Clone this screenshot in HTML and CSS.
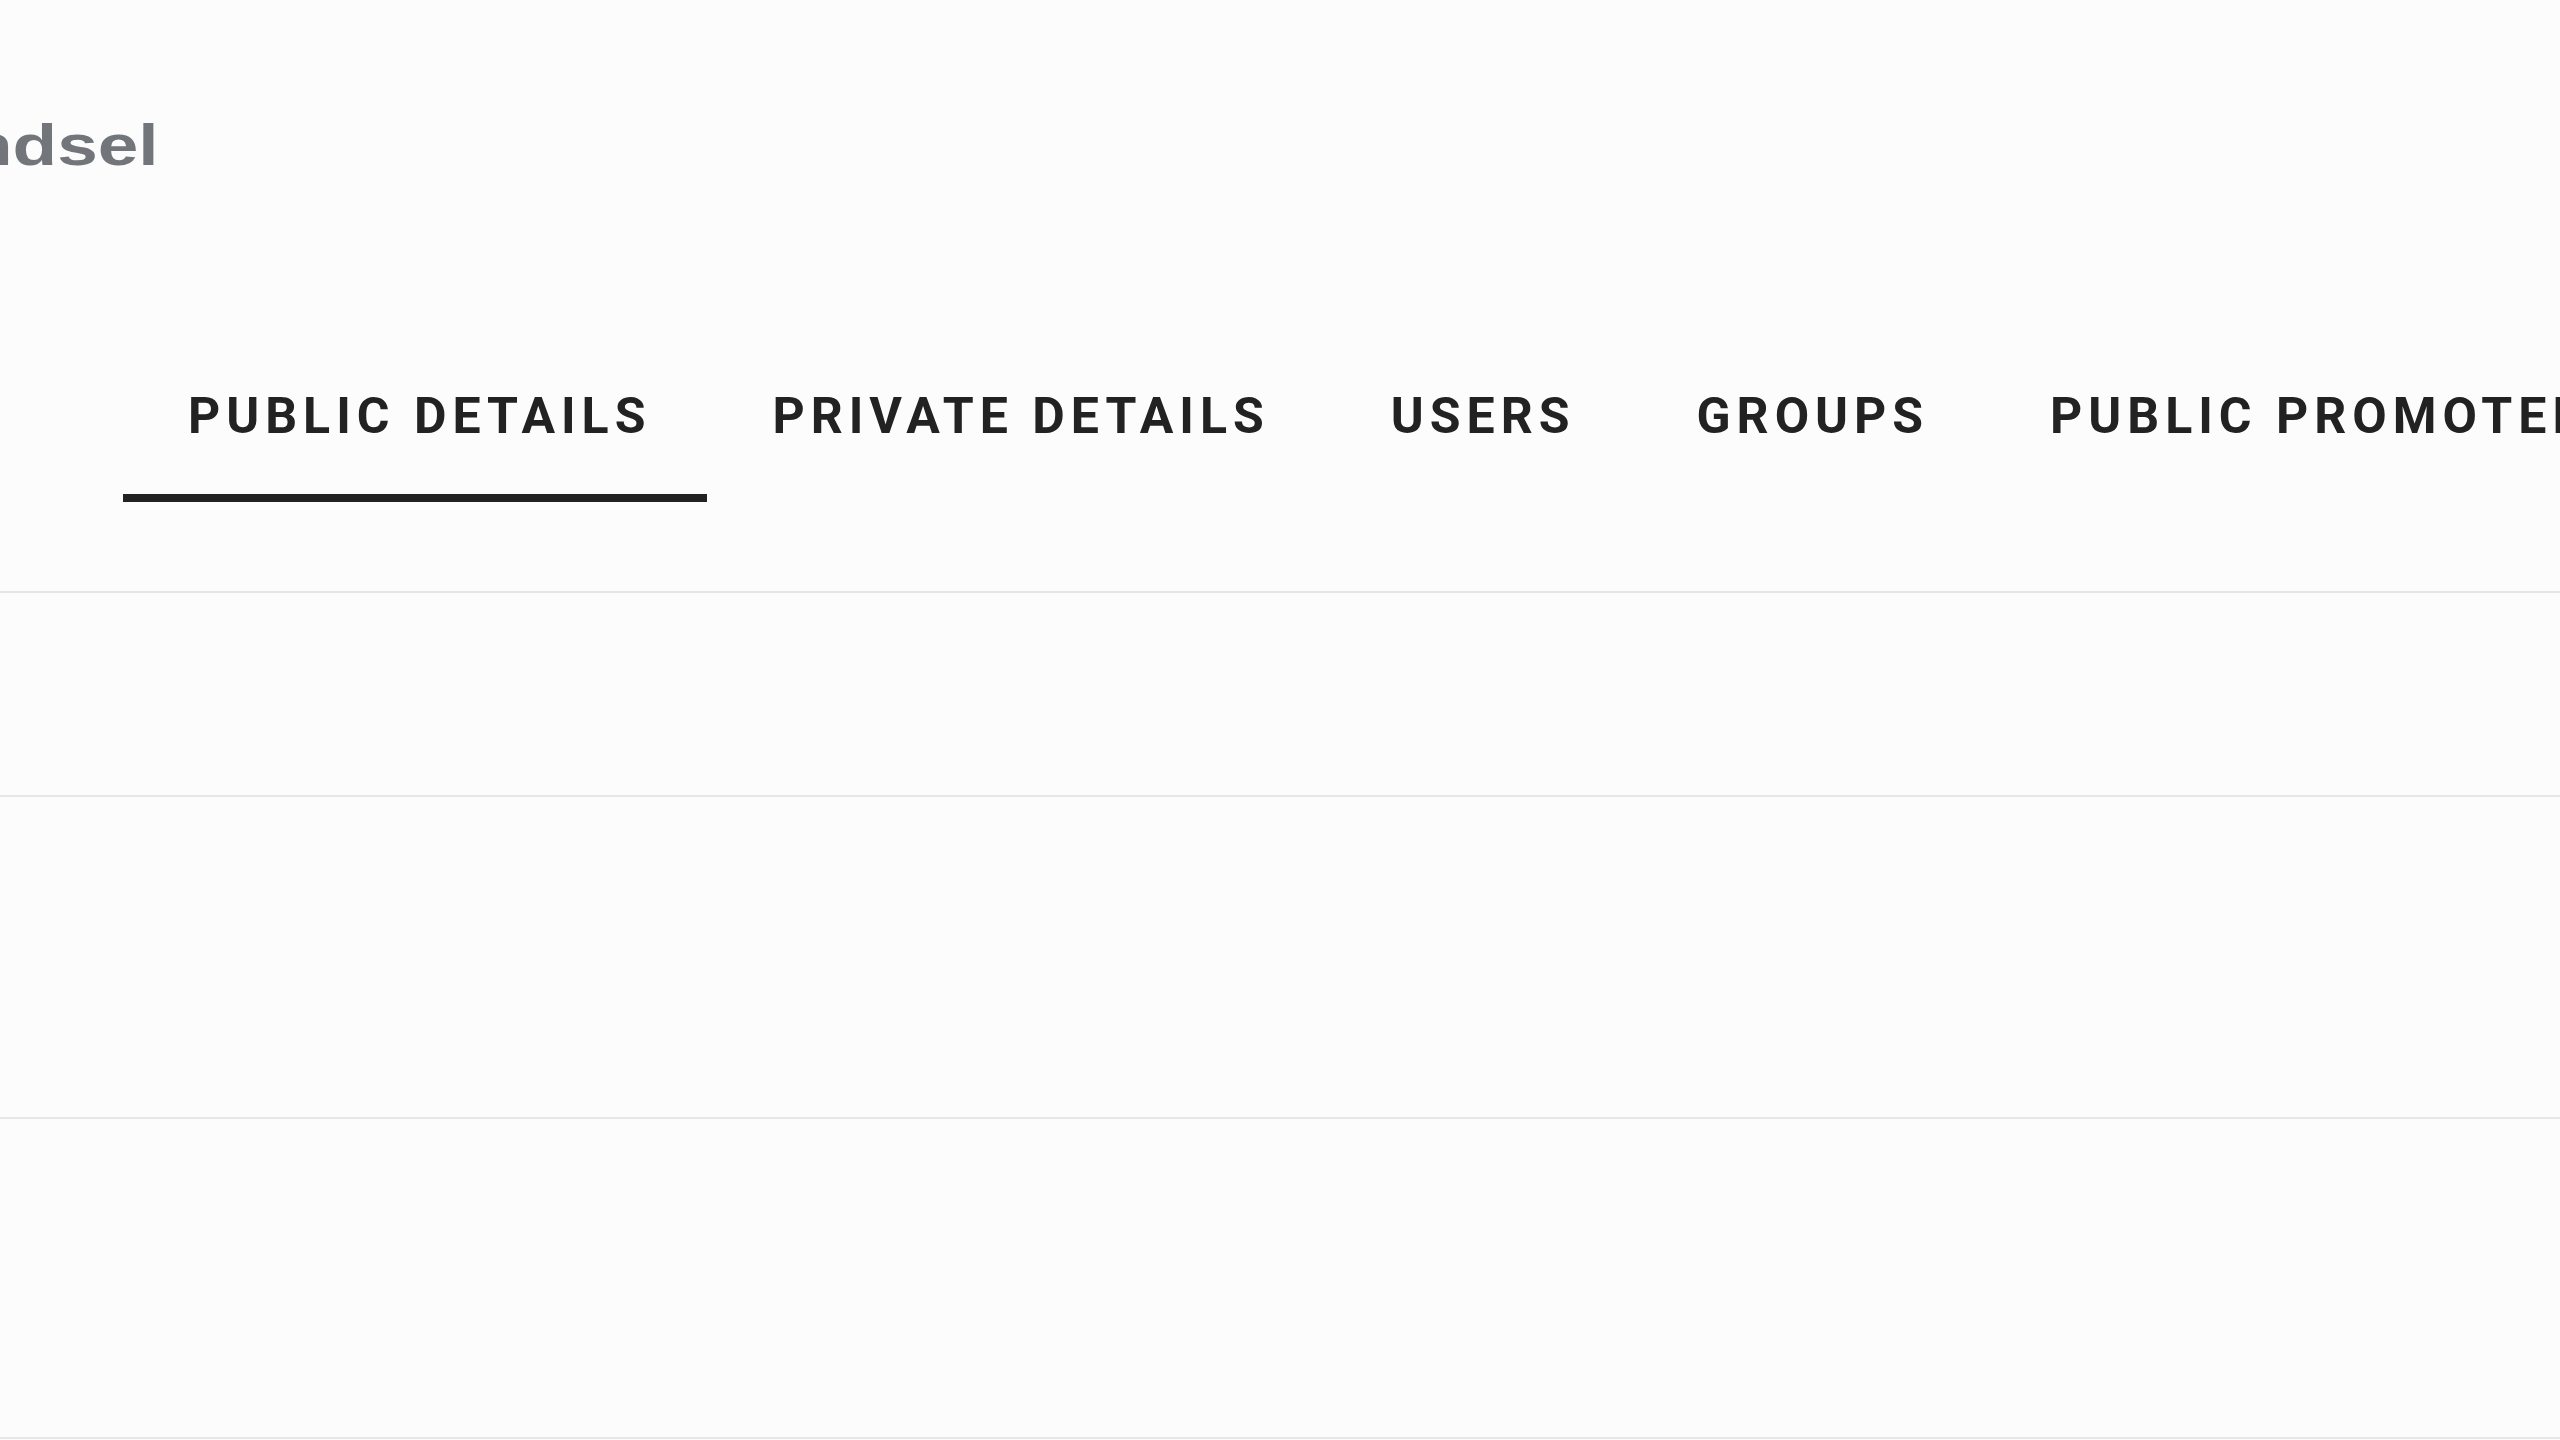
FILE: index.html
```html
<!DOCTYPE html>
<html lang="en">
<head>
<meta charset="utf-8">
<title>Public details</title>
<link rel="stylesheet" href="styles.css">
</head>
<body>
<div class="page">
  <header class="header">
    <h1 class="title">ndsel</h1>
  </header>
  <nav class="tabs-wrap">
    <ul class="tabs">
      <li class="tab active">PUBLIC DETAILS</li>
      <li class="tab">PRIVATE DETAILS</li>
      <li class="tab">USERS</li>
      <li class="tab">GROUPS</li>
      <li class="tab">PUBLIC PROMOTED</li>
    </ul>
  </nav>
  <section class="rows">
    <div class="row row-1"></div>
    <div class="row row-2"></div>
    <div class="row row-3"></div>
  </section>
</div>
</body>
</html>
```

FILE: styles.css
```css
html, body {
  margin: 0;
  padding: 0;
  background: #fcfcfc;
  overflow: hidden;
}

.page {
  width: 2560px;
  height: 1440px;
  overflow: hidden;
  display: flex;
  flex-direction: column;
}

.header {
  padding-top: 117px;
  height: 57px;
}

.title {
  display: inline-block;
  margin: 0 0 0 -32px;
  font-family: "Liberation Sans", Arial, sans-serif;
  font-weight: 700;
  font-size: 57px;
  line-height: 57px;
  color: #72767b;
  white-space: nowrap;
  transform: scaleX(1.28);
  transform-origin: left center;
}

.tabs-wrap {
  margin-top: 177px;
  padding-left: 123px;
  padding-bottom: 89px;
  border-bottom: 2px solid #e6e6e6;
  overflow: hidden;
}

.tabs {
  list-style: none;
  margin: 0;
  padding: 0;
  display: flex;
  white-space: nowrap;
}

.tab {
  flex: none;
  padding: 40px 56px 53px 65px;
  font-family: Roboto, "Noto Sans", sans-serif;
  font-weight: 700;
  font-size: 50px;
  line-height: 50px;
  letter-spacing: 6px;
  color: #222222;
  border-bottom: 8px solid transparent;
}

.tab.active {
  border-bottom-color: #222222;
}

.row {
  flex: none;
  border-bottom: 2px solid #e6e6e6;
}

.row-1 { height: 202px; }
.row-2 { height: 320px; }
.row-3 { height: 318px; }
```
